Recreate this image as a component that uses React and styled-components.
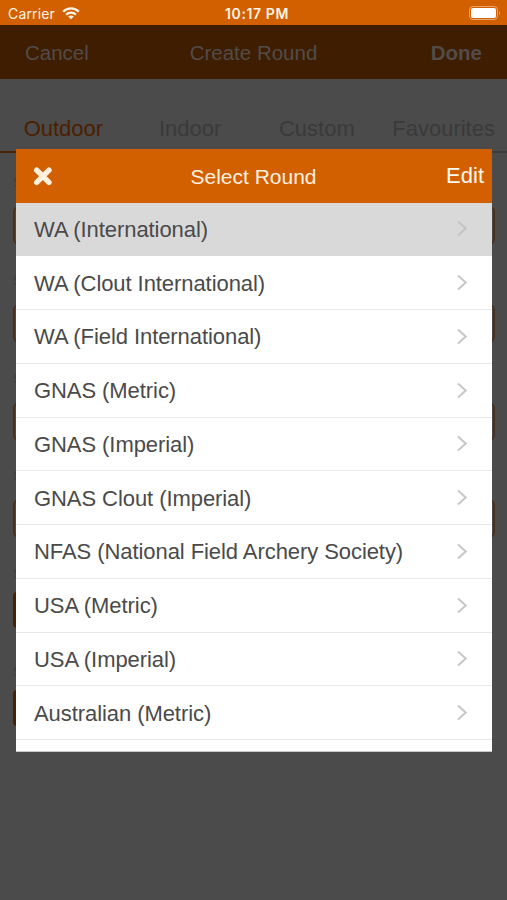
import React from 'react';
import styled, { createGlobalStyle } from 'styled-components';

const GlobalStyle = createGlobalStyle`
  * {
    box-sizing: border-box;
  }

  body {
    margin: 0;
    background: #4b4b4b;
    font-family: 'Liberation Sans', Arial, sans-serif;
  }
`;

const Screen = styled.div`
  position: relative;
  height: 900px;
  overflow: hidden;
  background: #4b4b4b;
`;

const StatusBar = styled.div`
  display: grid;
  grid-template-columns: 1fr auto 1fr;
  align-items: center;
  height: 25px;
  padding: 3px 6px 0 8px;
  color: #fff3e6;
  background: #d26000;
  font-family: Inter, 'Liberation Sans', sans-serif;
  font-size: 14px;
  line-height: 20px;
`;

const Carrier = styled.div`
  display: flex;
  align-items: center;
  gap: 7px;
  letter-spacing: 0.15px;
`;

const Wifi = styled.svg`
  margin-top: -2px;
`;

const Clock = styled.div`
  padding-left: 5px;
  font-size: 14px;
  font-weight: 600;
  letter-spacing: 0.6px;
`;

const Battery = styled.svg`
  justify-self: end;
  margin-top: -2px;
`;

const NavBar = styled.div`
  display: grid;
  grid-template-columns: 1fr auto 1fr;
  align-items: center;
  height: 54px;
  padding: 2px 25px 0;
  color: #514c49;
  background: #3f1d00;
  font-size: 20.5px;
`;

const NavItem = styled.div`
  text-align: ${props => props.align || 'left'};
  font-weight: ${props => (props.bold ? 'bold' : 'normal')};
`;

const Tabs = styled.div`
  display: grid;
  grid-template-columns: repeat(4, 126.75px);
  height: 74px;
  padding-top: 22px;
`;

const Tab = styled.div`
  display: flex;
  justify-content: center;
  align-items: center;
  height: 52px;
  padding-top: 6px;
  color: ${props => (props.active ? '#4b2000' : '#3a3a3a')};
  border-bottom: 2px solid ${props => (props.active ? '#4b2000' : '#3c3c3c')};
  font-size: 22px;
`;

const Form = styled.div`
  padding: 22px 12px 0 13px;
`;

const Field = styled.div`
  height: 97.8px;
`;

const Label = styled.div`
  height: ${props => (props.compact ? '26px' : '31px')};
  color: #3d3d3d;
  font-size: 13px;
  line-height: 16px;
`;

const Input = styled.div`
  height: 39px;
  border: 2px solid #4b2f1c;
  border-radius: 6px;
`;

const FormButton = styled.div`
  width: 470px;
  height: 36px;
  border-radius: 4px;
  background: #4b2000;
`;

const Modal = styled.div`
  position: absolute;
  top: 149px;
  left: 16px;
  width: 476px;
  height: 603px;
  overflow: hidden;
  background: #ffffff;
  border-bottom: 1px solid #c8c8c8;
`;

const ModalHeader = styled.div`
  display: grid;
  grid-template-columns: 1fr auto 1fr;
  align-items: center;
  height: 53.5px;
  padding: 1px 8px 0 17px;
  color: #fff0e0;
  background: #d26000;
  font-size: 21px;
`;

const Title = styled.div`
  margin-right: 10px;
  padding-top: 1px;
`;

const EditButton = styled.div`
  color: #fff8ee;
  font-size: 22px;
  text-align: right;
`;

const Row = styled.div`
  display: flex;
  justify-content: space-between;
  align-items: center;
  height: 53.75px;
  padding: 0 24px 0 18px;
  color: #4a4a4a;
  background: ${props => (props.selected ? '#d9d9d9' : '#ffffff')};
  border-bottom: 1px solid ${props => (props.selected ? '#d9d9d9' : '#e8e8e8')};
  font-size: 22px;
  letter-spacing: -0.07px;
`;

const RowText = styled.div`
  padding-top: 2px;
  white-space: nowrap;
`;

const WifiIcon = () => (
  <Wifi width="18" height="13" viewBox="0 0 18 13" fill="none" stroke="#fff3e6" strokeWidth="2.2">
    <path d="M1.2 4.8C5.5 0.3 12.5 0.3 16.8 4.8" />
    <path d="M4.1 7.7C6.8 4.9 11.2 4.9 13.9 7.7" />
    <path d="M9 12.3L6.2 9.5C7.8 8 10.2 8 11.8 9.5Z" fill="#fff3e6" stroke="none" />
  </Wifi>
);

const Cross = () => (
  <svg width="19" height="19" viewBox="0 0 19 19" stroke="#fff0e0" strokeWidth="5.4" strokeLinecap="round">
    <path d="M3.7 3.2L16 15.3M16 3.2L3.7 15.3" />
  </svg>
);

const Chevron = ({ color }) => (
  <svg width="12" height="17" viewBox="0 0 12 17" fill="none" stroke={color} strokeWidth="2">
    <path d="M2 1.5L9.7 8.5L2 15.5" />
  </svg>
);

const tabs = ['Outdoor', 'Indoor', 'Custom', 'Favourites'];

const inputs = [1, 2, 3, 4];

const buttons = [1, 2];

const rounds = [
  'WA (International)',
  'WA (Clout International)',
  'WA (Field International)',
  'GNAS (Metric)',
  'GNAS (Imperial)',
  'GNAS Clout (Imperial)',
  'NFAS (National Field Archery Society)',
  'USA (Metric)',
  'USA (Imperial)',
  'Australian (Metric)',
];

const App = () => (
  <Screen>
    <GlobalStyle />
    <StatusBar>
      <Carrier>
        Carrier
        <WifiIcon />
      </Carrier>
      <Clock>10:17 PM</Clock>
      <Battery width="32" height="14" viewBox="0 0 32 14">
        <rect x="0.5" y="0.5" width="28" height="13" rx="3.5" fill="none" stroke="#eba66d" />
        <rect x="2" y="2" width="25" height="10" rx="2" fill="#ffffff" />
        <path d="M30 5C31.3 5.5 31.3 8.5 30 9Z" fill="#eba66d" />
      </Battery>
    </StatusBar>
    <NavBar>
      <NavItem>Cancel</NavItem>
      <NavItem>Create Round</NavItem>
      <NavItem align="right" bold>
        Done
      </NavItem>
    </NavBar>
    <Tabs>
      {tabs.map((tab, i) => (
        <Tab key={tab} active={i === 0}>
          {tab}
        </Tab>
      ))}
    </Tabs>
    <Form>
      {inputs.map(id => (
        <Field key={id}>
          <Label>S</Label>
          <Input />
        </Field>
      ))}
      {buttons.map(id => (
        <Field key={id}>
          <Label compact>S</Label>
          <FormButton />
        </Field>
      ))}
    </Form>
    <Modal>
      <ModalHeader>
        <Cross />
        <Title>Select Round</Title>
        <EditButton>Edit</EditButton>
      </ModalHeader>
      {rounds.map((round, i) => (
        <Row key={round} selected={i === 0}>
          <RowText>{round}</RowText>
          <Chevron color={i === 0 ? '#c4c4c4' : '#c7c7c7'} />
        </Row>
      ))}
    </Modal>
  </Screen>
);

export default App;
